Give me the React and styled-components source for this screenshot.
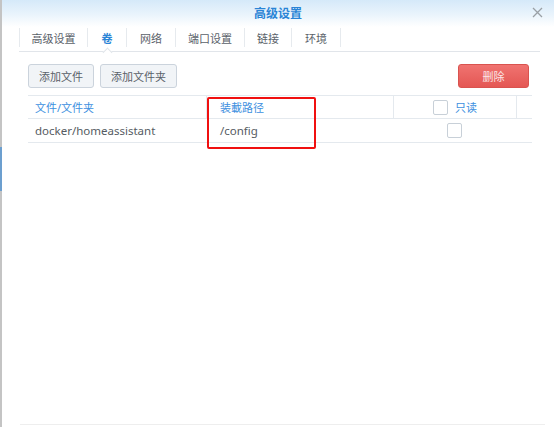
import React from "react";
import styled, { createGlobalStyle } from "styled-components";

const GlobalStyle = createGlobalStyle`
  html, body { margin: 0; padding: 0; background: #fff; }
  body { width: 554px; height: 427px; overflow: hidden; }
  * { box-sizing: border-box; }
`;

const FONT = `"Noto Sans", "Noto Sans CJK SC", sans-serif`;

const Window = styled.div`
  position: relative;
  width: 554px;
  height: 427px;
  display: flex;
  flex-direction: column;
  border-left: 2px solid #c4c4c4;
  font-family: ${FONT};
  background: #fff;
  &::before {
    content: "";
    position: absolute;
    left: -2px;
    top: 147px;
    width: 2px;
    height: 44px;
    background: #6c9fcf;
  }
`;

const Header = styled.div`
  height: 27px;
  flex: none;
  display: grid;
  grid-template-columns: 1fr auto 1fr;
  align-items: center;
  background: linear-gradient(#d5e9f9 0%, #eaf4fc 55%, #ffffff 100%);
`;

const Title = styled.div`
  grid-column: 2;
  font-size: 12px;
  font-weight: 700;
  color: #2a84d6;
  padding-bottom: 2px;
`;

const Close = styled.button`
  grid-column: 3;
  justify-self: end;
  margin-right: 11px;
  margin-bottom: 2px;
  width: 12px;
  height: 12px;
  padding: 0;
  border: 0;
  background: none;
  display: flex;
  align-items: center;
  justify-content: center;
`;

const TabBar = styled.div`
  margin: 0 14px 0 17px;
  height: 25px;
  flex: none;
  display: flex;
  align-items: flex-start;
  padding-top: 1px;
  border-bottom: 1px solid #e1e5ea;
`;

const Tab = styled.div`
  position: relative;
  width: ${(p) => p.$w}px;
  height: 19px;
  display: flex;
  align-items: center;
  justify-content: center;
  font-size: 11px;
  color: ${(p) => (p.$active ? "#2a84d6" : "#5a6169")};
  font-weight: ${(p) => (p.$active ? 700 : 400)};
  border-left: 1px solid #e6eaee;
  &:last-child { border-right: 1px solid #e6eaee; }
  ${(p) =>
    p.$active &&
    `&::after {
      content: "";
      position: absolute;
      left: 50%;
      bottom: -9px;
      width: 6px;
      height: 6px;
      margin-left: -3px;
      background: #fff;
      border-top: 1px solid #e1e5ea;
      border-left: 1px solid #e1e5ea;
      transform: rotate(45deg);
    }`}
`;

const Content = styled.div`
  flex: 1;
  padding-left: 26px;
`;

const Toolbar = styled.div`
  width: 504px;
  padding-right: 3px;
  margin-top: 12px;
  display: flex;
  align-items: center;
  gap: 6px;
`;

const Button = styled.button`
  height: 24px;
  width: ${(p) => p.$w}px;
  padding: 0;
  border-radius: 3px;
  font-family: ${FONT};
  font-size: 11px;
  border: 1px solid ${(p) => (p.$danger ? "#d9534f" : "#cbd3dc")};
  color: ${(p) => (p.$danger ? "#fbe6e6" : "#5a6169")};
  background: ${(p) =>
    p.$danger ? "linear-gradient(#f07370, #e45754)" : "#f1f4f7"};
  ${(p) => p.$danger && "margin-left: auto;"}
`;

const Table = styled.div`
  position: relative;
  width: 504px;
  margin-top: 7px;
  border-top: 1px solid #e4e9ee;
`;

const Row = styled.div`
  display: grid;
  grid-template-columns: 179px 187px 123px 15px;
  height: ${(p) => p.$h}px;
  border-bottom: 1px solid #e4e9ee;
`;

const Cell = styled.div`
  display: flex;
  align-items: center;
  gap: 7px;
  padding-left: ${(p) => p.$pl || 0}px;
  justify-content: ${(p) => (p.$center ? "center" : "flex-start")};
  font-size: ${(p) => (p.$head ? 11 : 11.5)}px;
  color: ${(p) => (p.$head ? "#3d8fe0" : "#555b62")};
  border-right: ${(p) => (p.$divider ? "1px solid #e4e9ee" : "0")};
`;

const Checkbox = styled.span`
  display: inline-block;
  width: 15px;
  height: 15px;
  border: 1px solid #c8d0d8;
  border-radius: 2px;
  background: #fff;
  ${(p) => p.$shift && `margin-left: ${p.$shift}px;`}
`;

const Highlight = styled.div`
  position: absolute;
  left: 179px;
  top: 1px;
  width: 109px;
  height: 52px;
  border: 2px solid #f01010;
  border-radius: 2px;
  pointer-events: none;
`;

const Footer = styled.div`
  flex: none;
  height: 1px;
  margin: 0 9px 2px 18px;
  background: #eeeeee;
`;

const tabs = [
  { label: "高级设置", w: 68 },
  { label: "卷", w: 39, active: true },
  { label: "网络", w: 49 },
  { label: "端口设置", w: 69 },
  { label: "链接", w: 47 },
  { label: "环境", w: 50 },
];

export default function App() {
  return (
    <>
      <GlobalStyle />
      <Window>
        <Header>
          <Title>高级设置</Title>
          <Close aria-label="close">
            <svg width="11" height="11" viewBox="0 0 11 11">
              <path d="M1 1L10 10M10 1L1 10" stroke="#9aa0a6" strokeWidth="1.3" />
            </svg>
          </Close>
        </Header>
        <TabBar>
          {tabs.map((t) => (
            <Tab key={t.label} $w={t.w} $active={t.active}>
              {t.label}
            </Tab>
          ))}
        </TabBar>
        <Content>
          <Toolbar>
            <Button $w={66}>添加文件</Button>
            <Button $w={77}>添加文件夹</Button>
            <Button $w={71} $danger>删除</Button>
          </Toolbar>
          <Table>
            <Row $h={23}>
              <Cell $head $pl={7} $divider>文件/文件夹</Cell>
              <Cell $head $pl={13} $divider>装載路径</Cell>
              <Cell $head $center $divider>
                <Checkbox />
                只读
              </Cell>
              <Cell />
            </Row>
            <Row $h={24}>
              <Cell $pl={7}>docker/homeassistant</Cell>
              <Cell $pl={13}>/config</Cell>
              <Cell $center>
                <Checkbox $shift={-2} />
              </Cell>
              <Cell />
            </Row>
            <Highlight />
          </Table>
        </Content>
        <Footer />
      </Window>
    </>
  );
}
